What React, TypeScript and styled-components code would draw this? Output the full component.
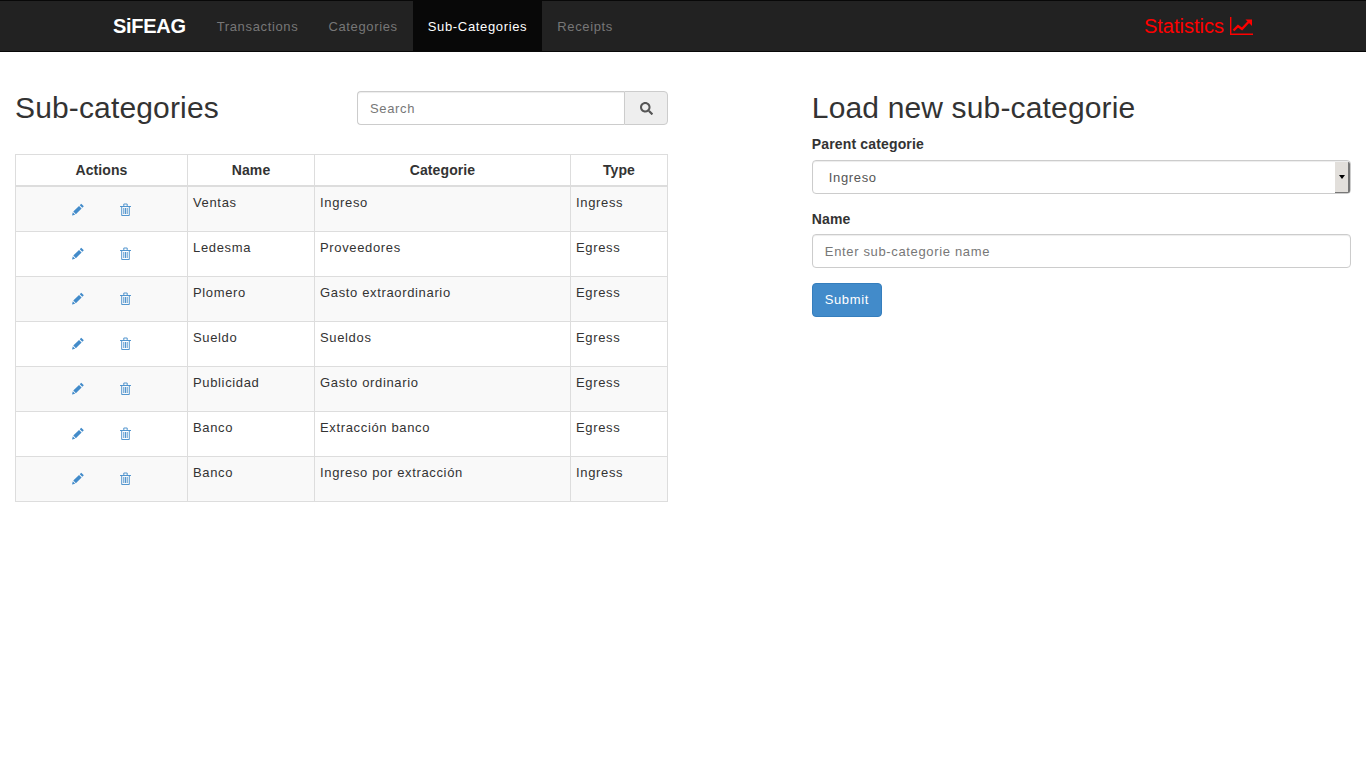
import styled, { createGlobalStyle } from 'styled-components';
import { FaSearch } from 'react-icons/fa';

const rows = [
  { name: 'Ventas', category: 'Ingreso', type: 'Ingress' },
  { name: 'Ledesma', category: 'Proveedores', type: 'Egress' },
  { name: 'Plomero', category: 'Gasto extraordinario', type: 'Egress' },
  { name: 'Sueldo', category: 'Sueldos', type: 'Egress' },
  { name: 'Publicidad', category: 'Gasto ordinario', type: 'Egress' },
  { name: 'Banco', category: 'Extracción banco', type: 'Egress' },
  { name: 'Banco', category: 'Ingreso por extracción', type: 'Ingress' },
];

const GlobalStyle = createGlobalStyle`
  * {
    box-sizing: border-box;
  }
  body {
    margin: 0;
    background: #fff;
    color: #333;
    font-family: 'Liberation Sans', Arial, sans-serif;
    font-size: 13px;
    letter-spacing: 0.65px;
    line-height: 20px;
  }
`;

const Navbar = styled.nav`
  display: flex;
  align-items: stretch;
  height: 52px;
  padding-left: 113px;
  padding-right: 113px;
  background: #222;
  border-top: 1px solid #080808;
  border-bottom: 1px solid #080808;
`;
const Brand = styled.a`
  display: flex;
  align-items: center;
  margin-right: 16px;
  color: #fff;
  font-size: 20px;
  font-weight: bold;
  letter-spacing: -0.3px;
`;
const NavLink = styled.a<{ $active?: boolean }>`
  display: flex;
  align-items: center;
  padding: 1px 15px 0;
  color: ${(p) => (p.$active ? '#fff' : '#777')};
  background: ${(p) => (p.$active ? '#080808' : 'transparent')};
`;
const Statistics = styled.a`
  display: flex;
  align-items: center;
  gap: 6px;
  margin-left: auto;
  color: #f00;
  font-size: 20px;
  letter-spacing: 0;
`;
const Page = styled.main`
  display: grid;
  grid-template-columns: repeat(12, 1fr);
  margin-top: 39px;
`;
const LeftColumn = styled.section`
  grid-column: 1 / span 6;
  padding: 0 15px;
`;
const RightColumn = styled.section`
  grid-column: 8 / span 5;
  padding: 0 15px;
`;
const HeaderRow = styled.div`
  display: flex;
  align-items: center;
  justify-content: space-between;
  height: 34px;
  margin-bottom: 29px;
`;
const Title = styled.h2`
  margin: 0;
  color: #333;
  font-size: 30px;
  font-weight: 500;
  letter-spacing: 0.15px;
  line-height: 34px;
`;
const SearchGroup = styled.div`
  display: flex;
  width: 311px;
`;
const TextInput = styled.input`
  flex: 1;
  min-width: 0;
  width: 100%;
  height: 34px;
  padding: 6px 12px;
  color: #555;
  font: inherit;
  letter-spacing: inherit;
  background: #fff;
  border: 1px solid #ccc;
  border-radius: 4px;
  box-shadow: inset 0 1px 1px rgba(0, 0, 0, 0.075);
  &::placeholder {
    color: #777;
    opacity: 1;
  }
`;
const SearchInput = styled(TextInput)`
  border-radius: 4px 0 0 4px;
  border-right: 0;
`;
const SearchButton = styled.button`
  display: flex;
  align-items: center;
  justify-content: center;
  width: 44px;
  height: 34px;
  padding: 0;
  color: #555;
  font-size: 13px;
  background: #eee;
  border: 1px solid #ccc;
  border-radius: 0 4px 4px 0;
`;
const Table = styled.table`
  width: 100%;
  table-layout: fixed;
  border-collapse: collapse;
`;
const Th = styled.th<{ $width: number }>`
  width: ${(p) => p.$width}px;
  height: 31px;
  padding: 5px;
  color: #333;
  font-size: 14px;
  letter-spacing: 0.1px;
  text-align: center;
  border: 1px solid #ddd;
  border-bottom-width: 2px;
`;
const Tr = styled.tr`
  &:nth-child(odd) {
    background: #f9f9f9;
  }
`;
const Td = styled.td`
  height: 45px;
  padding: 5px;
  padding-top: 6px;
  vertical-align: top;
  border: 1px solid #ddd;
`;
const ActionCell = styled.div`
  display: flex;
  justify-content: center;
  gap: 36px;
  padding-top: 7px;
`;
const IconLink = styled.a`
  display: flex;
  width: 12px;
  height: 18px;
  align-items: center;
  color: #428bca;
`;
const SectionTitle = styled(Title)`
  margin-bottom: 9px;
`;
const FormGroup = styled.div`
  margin-bottom: 15px;
`;
const Label = styled.label`
  display: block;
  margin-bottom: 5px;
  color: #333;
  font-size: 14px;
  font-weight: bold;
  letter-spacing: 0.15px;
`;
const SelectWrap = styled.div`
  position: relative;
  margin-top: 6px;
`;
const Select = styled.select`
  display: block;
  width: 100%;
  height: 34px;
  padding: 7px 12px 5px 16px;
  color: #555;
  font: inherit;
  letter-spacing: inherit;
  appearance: none;
  background: #fff;
  border: 1px solid #ccc;
  border-radius: 4px;
  box-shadow: inset 0 1px 1px rgba(0, 0, 0, 0.075);
`;
const SelectArrow = styled.span`
  position: absolute;
  top: 2px;
  right: 1px;
  display: flex;
  align-items: center;
  justify-content: center;
  width: 15px;
  height: 31px;
  background: #e2dfdb;
  border-right: 2px solid #777;
  border-bottom: 1px solid #777;
  border-radius: 0 2px 2px 0;
  &::after {
    content: '';
    border-left: 3px solid transparent;
    border-right: 3px solid transparent;
    border-top: 4px solid #000;
  }
`;
const SubmitButton = styled.button`
  width: 70px;
  height: 34px;
  padding: 0;
  color: #fff;
  font: inherit;
  letter-spacing: inherit;
  background: #428bca;
  border: 1px solid #357ebd;
  border-radius: 4px;
`;

const PencilIcon = () => (
  <svg width="13" height="13" viewBox="0 0 13 13" fill="currentColor">
    <path d="M10 0.2 12.8 3 11.2 4.6 8.4 1.8ZM7.6 2.6 10.4 5.4 4.2 11.6 1.4 8.8ZM0.9 9.6 3.4 12.1 0 13Z" />
  </svg>
);

const TrashIcon = () => (
  <svg width="12" height="13" viewBox="0 0 12 13" fill="none" stroke="currentColor" strokeWidth="0.9">
    <path d="M0 3.5H11M3.8 3.5V1H7.2V3.5M1.7 3.5V12.5H9.3V3.5M3.8 5V11M5.5 5V11M7.2 5V11" />
  </svg>
);

const ChartIcon = () => (
  <svg width="23" height="18" viewBox="0 0 23 18" fill="none" stroke="currentColor">
    <path d="M0.7 0V17.2H23" strokeWidth="1.4" />
    <path d="M3.5 13.5 8 9 12 12 18.5 5" strokeWidth="2.4" />
    <path d="M15.5 2.5H22V9Z" fill="currentColor" stroke="none" />
  </svg>
);

export default function App() {
  return (
    <>
      <GlobalStyle />
      <Navbar>
        <Brand>SiFEAG</Brand>
        <NavLink>Transactions</NavLink>
        <NavLink>Categories</NavLink>
        <NavLink $active>Sub-Categories</NavLink>
        <NavLink>Receipts</NavLink>
        <Statistics>
          Statistics <ChartIcon />
        </Statistics>
      </Navbar>
      <Page>
        <LeftColumn>
          <HeaderRow>
            <Title>Sub-categories</Title>
            <SearchGroup>
              <SearchInput placeholder="Search" />
              <SearchButton>
                <FaSearch />
              </SearchButton>
            </SearchGroup>
          </HeaderRow>
          <Table>
            <thead>
              <tr>
                <Th $width={172}>Actions</Th>
                <Th $width={127}>Name</Th>
                <Th $width={256}>Categorie</Th>
                <Th $width={97}>Type</Th>
              </tr>
            </thead>
            <tbody>
              {rows.map((row, i) => (
                <Tr key={i}>
                  <Td>
                    <ActionCell>
                      <IconLink>
                        <PencilIcon />
                      </IconLink>
                      <IconLink>
                        <TrashIcon />
                      </IconLink>
                    </ActionCell>
                  </Td>
                  <Td>{row.name}</Td>
                  <Td>{row.category}</Td>
                  <Td>{row.type}</Td>
                </Tr>
              ))}
            </tbody>
          </Table>
        </LeftColumn>
        <RightColumn>
          <SectionTitle>Load new sub-categorie</SectionTitle>
          <FormGroup>
            <Label>Parent categorie</Label>
            <SelectWrap>
              <Select defaultValue="Ingreso">
                <option>Ingreso</option>
              </Select>
              <SelectArrow />
            </SelectWrap>
          </FormGroup>
          <FormGroup>
            <Label>Name</Label>
            <TextInput placeholder="Enter sub-categorie name" />
          </FormGroup>
          <SubmitButton>Submit</SubmitButton>
        </RightColumn>
      </Page>
    </>
  );
}
